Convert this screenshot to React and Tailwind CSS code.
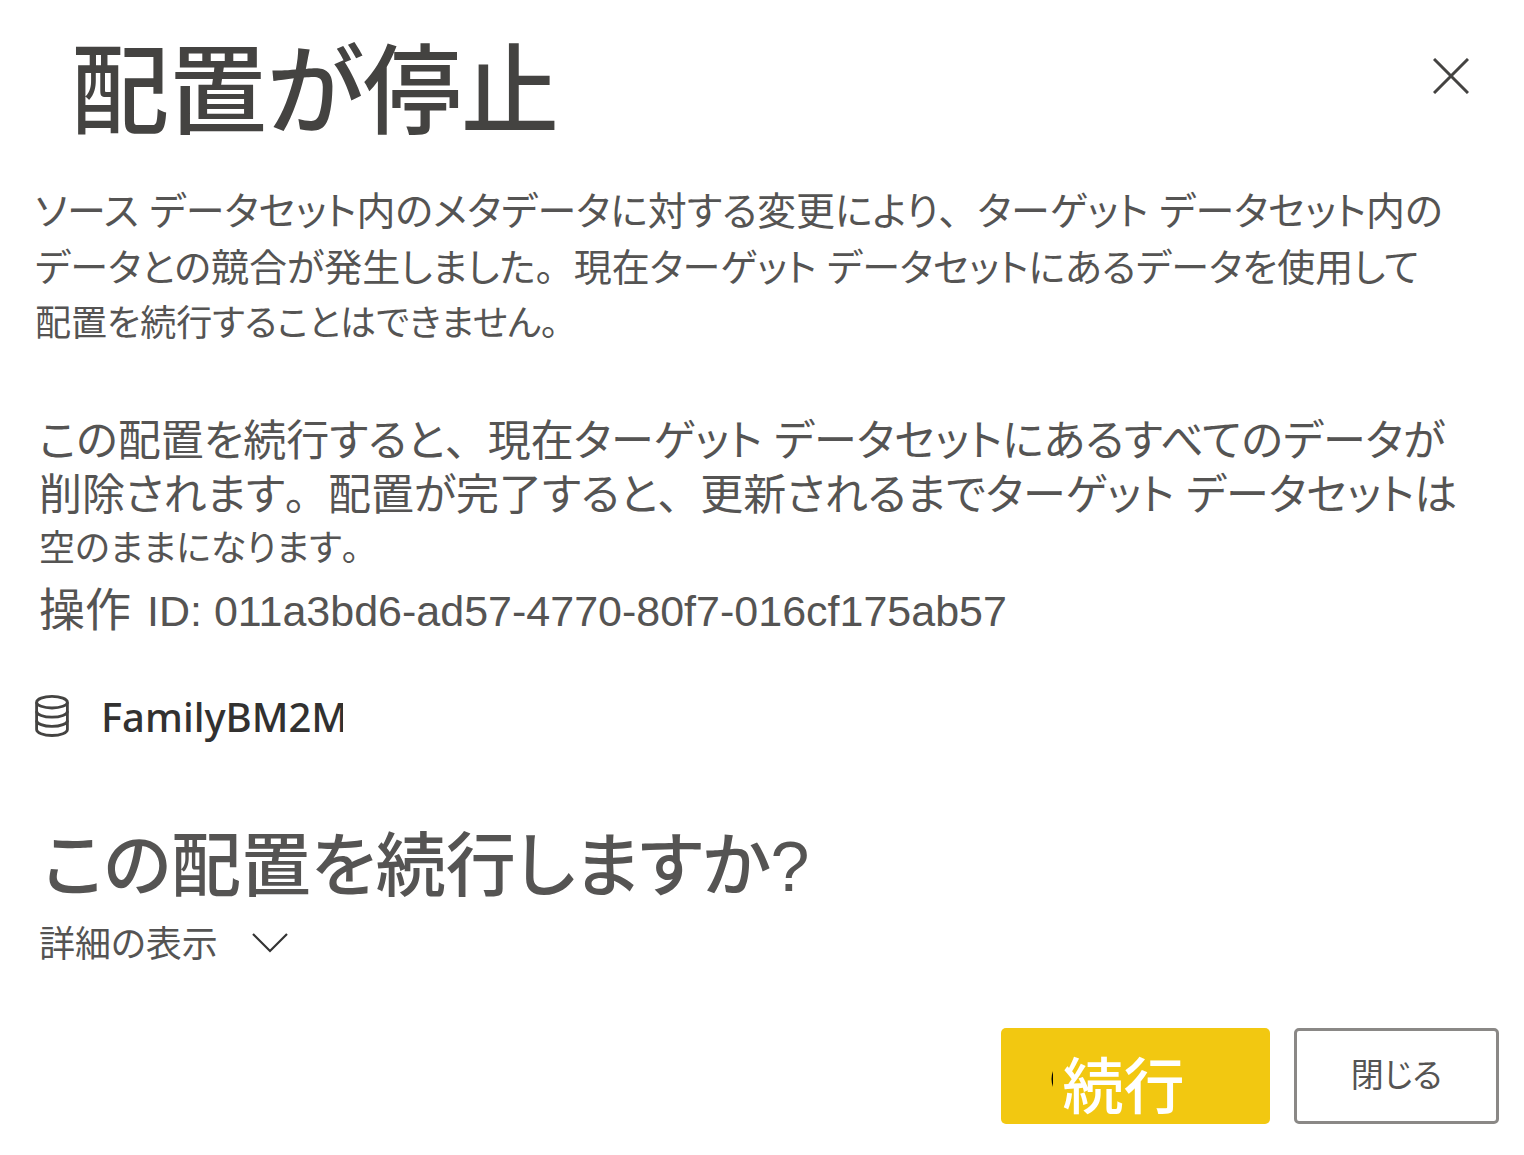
const introLines = [
  { text: 'ソース データセット内のメタデータに対する変更により、ターゲット データセット内の', size: 'text-[39px]' },
  { text: 'データとの競合が発生しました。現在ターゲット データセットにあるデータを使用して', size: 'text-[38px]' },
  { text: '配置を続行することはできません。', size: 'text-[36px]' },
];

const warningLines = [
  { text: 'この配置を続行すると、現在ターゲット データセットにあるすべてのデータが', size: 'text-[43px]' },
  { text: '削除されます。配置が完了すると、更新されるまでターゲット データセットは', size: 'text-[43px]' },
  { text: '空のままになります。', size: 'text-[36px]' },
];

// Kana are set proportionally, while 、 and 。 keep their full width.
function Lines({ lines, className }) {
  return (
    <p className={className}>
      {lines.map((line) => (
        <span key={line.text} className={`block whitespace-nowrap ${line.size}`}>
          {line.text.split(/([、。])/).map((part, index) =>
            index % 2 === 1 ? (
              <span key={index} className="[font-feature-settings:normal]">
                {part}
              </span>
            ) : (
              part
            ),
          )}
        </span>
      ))}
    </p>
  );
}

function CloseIcon() {
  return (
    <svg viewBox="0 0 36 36" className="size-9" fill="none" stroke="#444341" strokeWidth="3" aria-hidden="true">
      <path d="M1 1L35 35M35 1L1 35" />
    </svg>
  );
}

function DatabaseIcon() {
  return (
    <svg viewBox="0 0 34 42" className="h-[42px] w-[34px]" fill="none" stroke="#444341" strokeWidth="2.8" aria-hidden="true">
      <ellipse cx="17" cy="7.2" rx="15.4" ry="5.8" />
      <path d="M1.6 7.2V34.5C1.6 37.8 8.5 40.5 17 40.5S32.4 37.8 32.4 34.5V7.2" />
      <path d="M1.6 16.2C1.6 19.5 8.5 22.2 17 22.2S32.4 19.5 32.4 16.2" />
      <path d="M1.6 25.4C1.6 28.7 8.5 31.4 17 31.4S32.4 28.7 32.4 25.4" />
    </svg>
  );
}

function ChevronIcon() {
  return (
    <svg viewBox="0 0 36 20" className="h-5 w-9" fill="none" stroke="#333" strokeWidth="2.2" aria-hidden="true">
      <path d="M1 1L18 18L35 1" />
    </svg>
  );
}

export default function App() {
  return (
    <main
      role="dialog"
      aria-labelledby="dialog-title"
      className="bg-white pr-[25px] pb-8 pl-[35px] font-['Liberation_Sans','Noto_Sans_CJK_JP',sans-serif] text-[#555453] [font-feature-settings:'palt']"
    >
      <header className="flex items-start justify-between pt-8 pr-[30px] pl-9">
        <h1 id="dialog-title" className="text-[98px] leading-[120px] font-medium text-[#444341]">
          配置が停止
        </h1>
        <button type="button" aria-label="閉じる" className="mt-[26px]">
          <CloseIcon />
        </button>
      </header>

      <Lines lines={introLines} className="mt-8 leading-[56px]" />
      <Lines lines={warningLines} className="mt-[62px] pl-1 leading-[54px]" />
      <p className="mt-0.5 flex items-baseline gap-4 pl-1 leading-[64px]">
        <span className="text-[46px]">操作</span>
        <span className="text-[43px]">ID: 011a3bd6-ad57-4770-80f7-016cf175ab57</span>
      </p>

      <div className="mt-[42px] flex items-center gap-8">
        <DatabaseIcon />
        <span className="w-[242px] overflow-hidden pt-0.5 font-['Noto_Sans',sans-serif] text-[40px] leading-[60px] font-medium whitespace-nowrap text-[#323130]">
          FamilyBM2M
        </span>
      </div>

      <h2 className="mt-[74px] ml-2 text-[70px] leading-[92px] font-medium">この配置を続行しますか?</h2>

      <button type="button" aria-expanded="false" className="mt-1 flex items-center gap-[34px] pl-1">
        <span className="pt-1 text-[36px] leading-[48px]">詳細の表示</span>
        <ChevronIcon />
      </button>

      <footer className="mt-[59px] flex justify-end gap-6">
        <button type="button" className="relative h-24 w-[269px] rounded-[5px] bg-[#f2c811] pt-6 pr-6 text-[61px] leading-[60px] font-medium text-white">
          <svg viewBox="0 0 2 16" className="absolute top-[43px] left-[50px] h-4 w-0.5" aria-hidden="true">
            <path d="M2 0Q-1 8 2 16Z" fill="#000" />
          </svg>
          続行
        </button>
        <button type="button" className="h-24 w-[205px] rounded-[5px] border-[3px] border-[#8a8886] text-[33px] leading-[48px]">
          閉じる
        </button>
      </footer>
    </main>
  );
}
